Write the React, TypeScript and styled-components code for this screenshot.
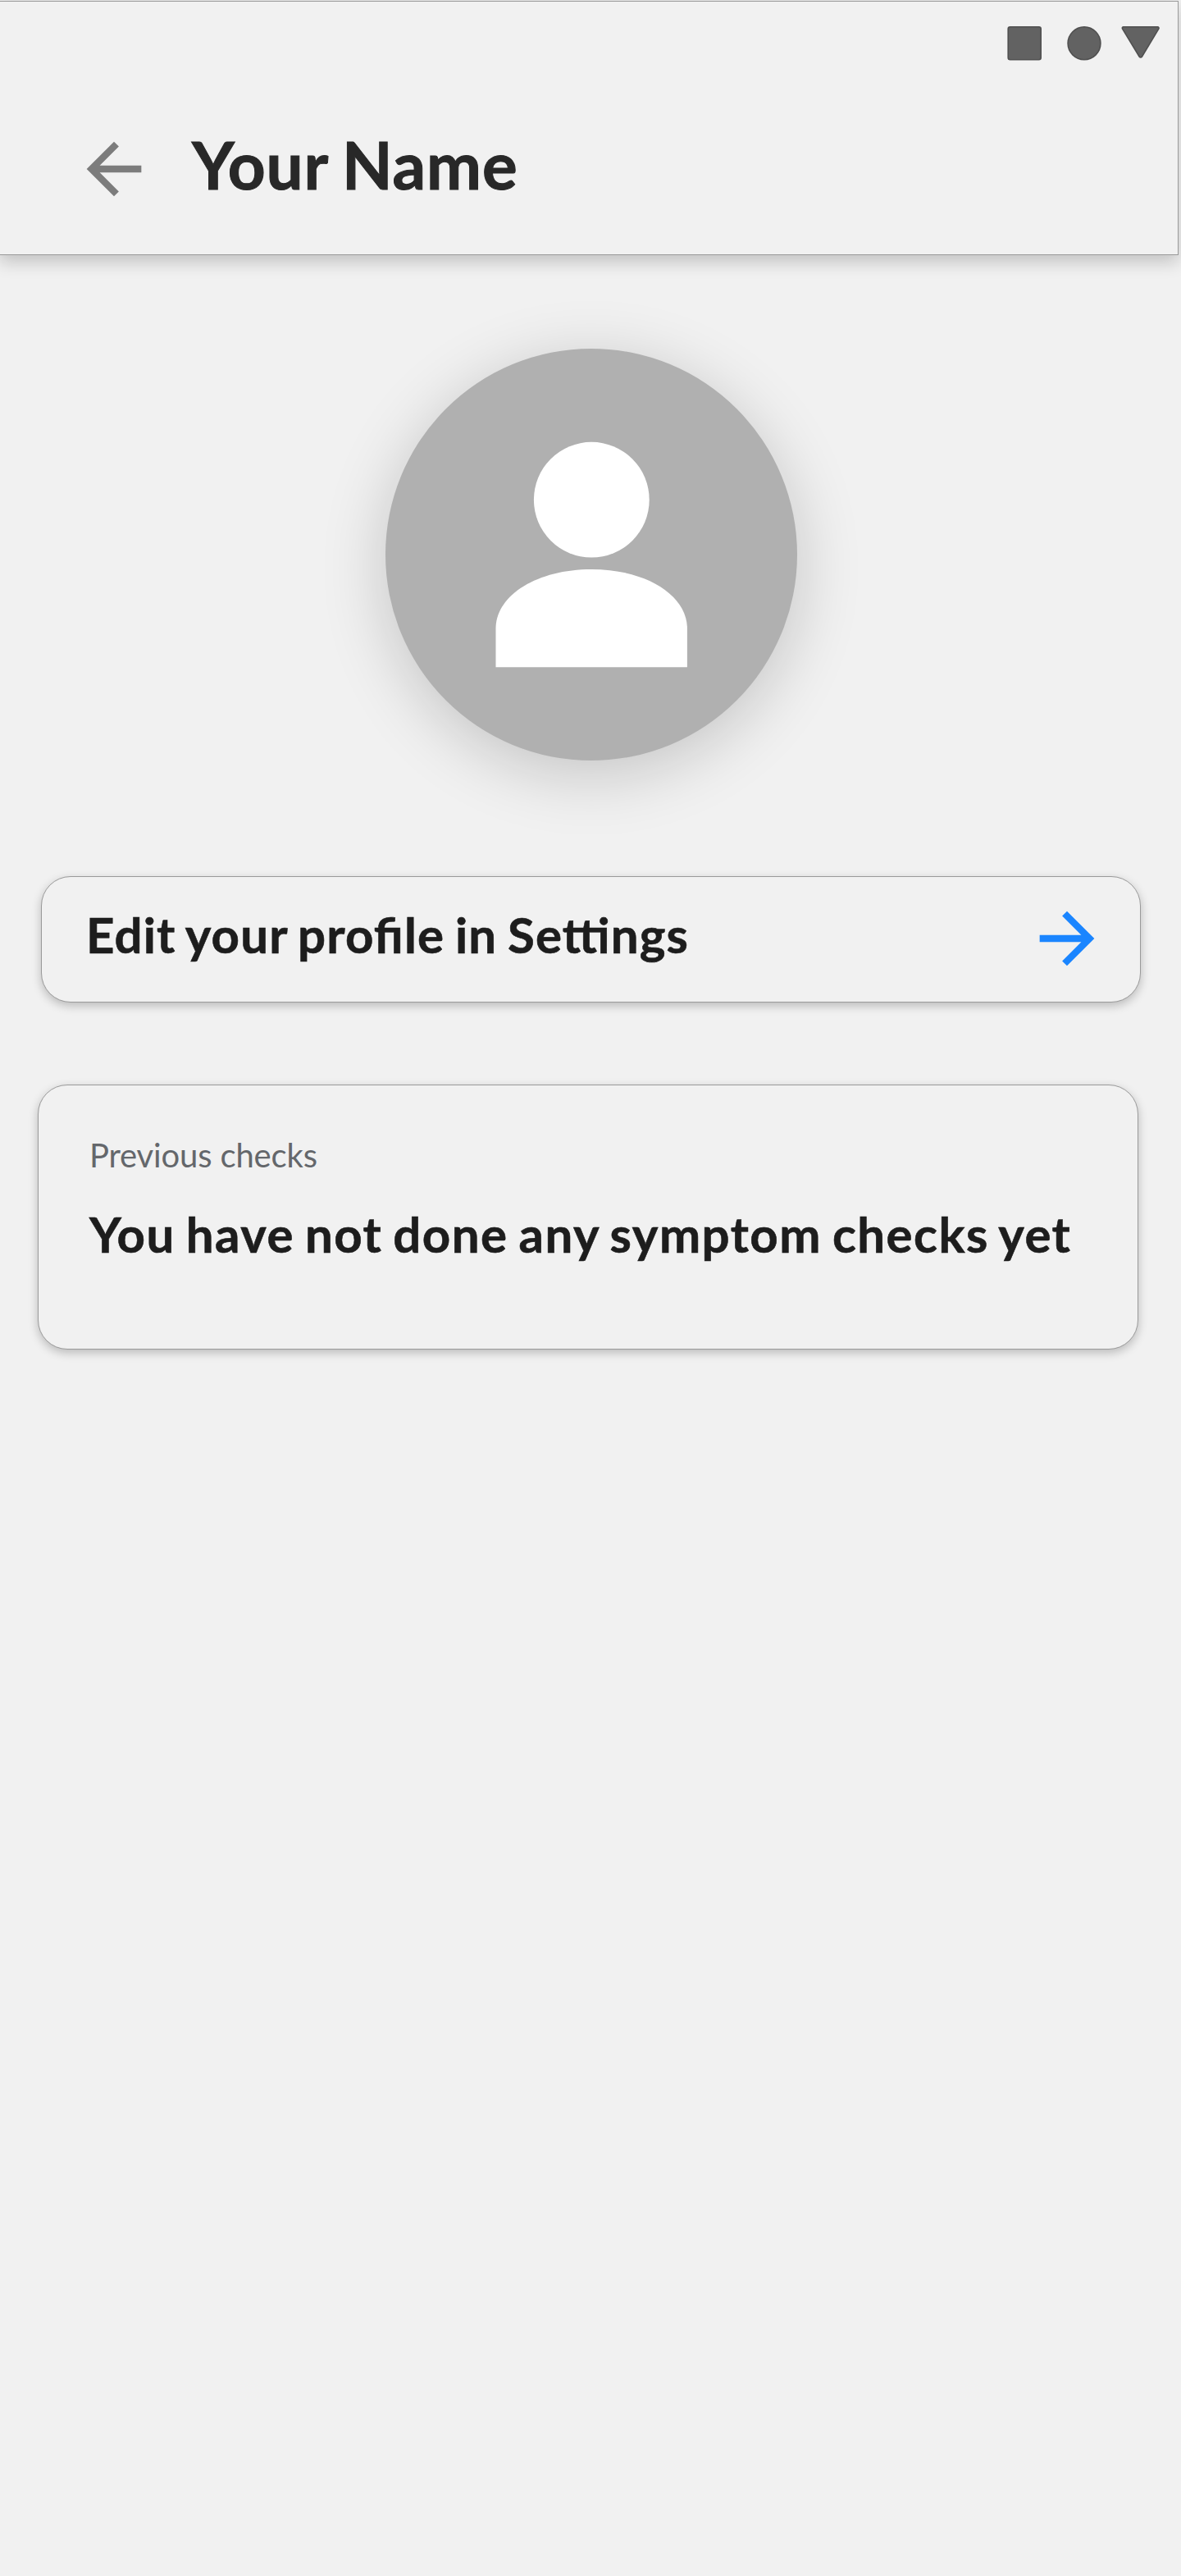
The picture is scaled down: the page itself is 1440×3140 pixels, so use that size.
import React from "react";
import styled, { createGlobalStyle } from "styled-components";

const GlobalStyle = createGlobalStyle`
  *, *::before, *::after { box-sizing: border-box; }
  html, body { margin: 0; padding: 0; background: #f1f1f1; }
  body { font-family: "Google Sans", Lato, "Open Sans", sans-serif; }
`;

const Screen = styled.div`
  display: flex;
  flex-direction: column;
  width: 1440px;
  height: 3140px;
  padding-top: 1px;
  overflow: hidden;
  background: #f1f1f1;
`;

const Header = styled.header`
  flex: none;
  width: 1438px;
  height: 310px;
  margin-left: -1px;
  background: #f1f1f1;
  border: 1px solid #9a9a9a;
  box-shadow: 0 8px 20px rgba(0, 0, 0, 0.2);
`;

const StatusBar = styled.div`
  display: flex;
  justify-content: flex-end;
  height: 104px;
  padding: 30px 21px 0 0;
`;

const StatusIcons = styled.svg`
  display: block;
  width: 188px;
  height: 42px;
`;

const Toolbar = styled.div`
  display: flex;
  align-items: center;
  gap: 45px;
  height: 200px;
  padding-left: 89px;
`;

const IconButton = styled.button`
  display: block;
  flex: none;
  width: 100px;
  height: 100px;
  padding: 0;
  border: 0;
  background: none;
  color: ${(p) => p.color};
`;

const Icon = styled.svg`
  display: block;
  width: 100px;
  height: 100px;
  fill: currentColor;
`;

const Title = styled.h1`
  margin: 0;
  padding-bottom: 12px;
  font-size: 80px;
  line-height: 96px;
  font-weight: 700;
  letter-spacing: 0.9px;
  word-spacing: -3px;
  color: #282828;
  -webkit-text-stroke: 1px #282828;
`;

const Content = styled.main`
  display: flex;
  flex-direction: column;
  padding: 113.500px 49px 0 46px;
`;

const Avatar = styled.div`
  align-self: center;
  width: 502px;
  height: 502px;
  margin-left: 5px;
  border-radius: 50%;
  background: #b0b0b0;
  box-shadow: 0 16px 80px rgba(0, 0, 0, 0.19);
`;

const AvatarFigure = styled.svg`
  display: block;
  width: 502px;
  height: 502px;
`;

const Card = styled.section`
  border: 1px solid #9a9a9a;
  border-radius: 36px;
  background: #f1f1f1;
  box-shadow: 0 4px 12px rgba(0, 0, 0, 0.23);
`;

const SettingsCard = styled(Card)`
  display: flex;
  justify-content: space-between;
  width: 1341px;
  height: 154px;
  margin: 141.500px 0 0 4px;
  padding: 25px 39px 0 54px;
`;

const ChecksCard = styled(Card)`
  width: 1342px;
  height: 323px;
  margin-top: 100px;
  padding: 61px 20px 0 62px;
`;

const CardText = styled.p<{ $spacing: number }>`
  margin: 0;
  font-size: 60px;
  line-height: 72px;
  font-weight: 700;
  letter-spacing: ${(p) => p.$spacing}px;
  word-spacing: -3px;
  font-feature-settings: "liga" 1;
  white-space: nowrap;
  color: #1d1d1d;
  -webkit-text-stroke: 0.6px #1d1d1d;
`;

const SettingsText = styled(CardText)`
  padding-top: 9px;
`;

const CardLabel = styled.h2`
  margin: 0 0 36px;
  font-size: 40px;
  line-height: 48px;
  font-weight: 400;
  letter-spacing: -0.15px;
  color: #64676b;
`;

export default function App() {
  return (
    <>
      <GlobalStyle />
      <Screen>
        <Header>
          <StatusBar>
            <StatusIcons viewBox="0 0 188 42" fill="#626262" stroke="#505050" strokeWidth="1.6">
              <rect x="2.2" y="0.8" width="40" height="40" rx="2.5" />
              <circle cx="95" cy="20.8" r="19.9" />
              <path d="M143 .8h41.500a1.500 1.500 0 0 1 1.300 2.300L165.300 37.200a1.800 1.800 0 0 1-3 0L141.600 3.100A1.500 1.500 0 0 1 143 .8Z" />
            </StatusIcons>
          </StatusBar>
          <Toolbar>
            <IconButton color="#7c7c7c" aria-label="Back">
              <Icon viewBox="0 0 24 24">
                <path d="M20 11H7.830l5.590-5.590L12 4l-8 8 8 8 1.410-1.410L7.830 13H20v-2z" />
              </Icon>
            </IconButton>
            <Title>Your Name</Title>
          </Toolbar>
        </Header>
        <Content>
          <Avatar>
            <AvatarFigure viewBox="0 0 502 502" fill="#fff">
              <circle cx="251.300" cy="184.200" r="70.400" />
              <path d="M134.500 388.300V341C134.500 301 184 268.900 251.300 268.900S367.900 301 367.900 341V388.300Z" />
            </AvatarFigure>
          </Avatar>
          <SettingsCard>
            <SettingsText $spacing={1.13}>Edit your profile in Settings</SettingsText>
            <IconButton color="#1a85ff" aria-label="Open settings">
              <Icon viewBox="0 0 24 24">
                <path d="M12 4l-1.410 1.410L16.170 11H4v2h12.170l-5.580 5.590L12 20l8-8z" />
              </Icon>
            </IconButton>
          </SettingsCard>
          <ChecksCard>
            <CardLabel>Previous checks</CardLabel>
            <CardText $spacing={1.45}>You have not done any symptom checks yet</CardText>
          </ChecksCard>
        </Content>
      </Screen>
    </>
  );
}
